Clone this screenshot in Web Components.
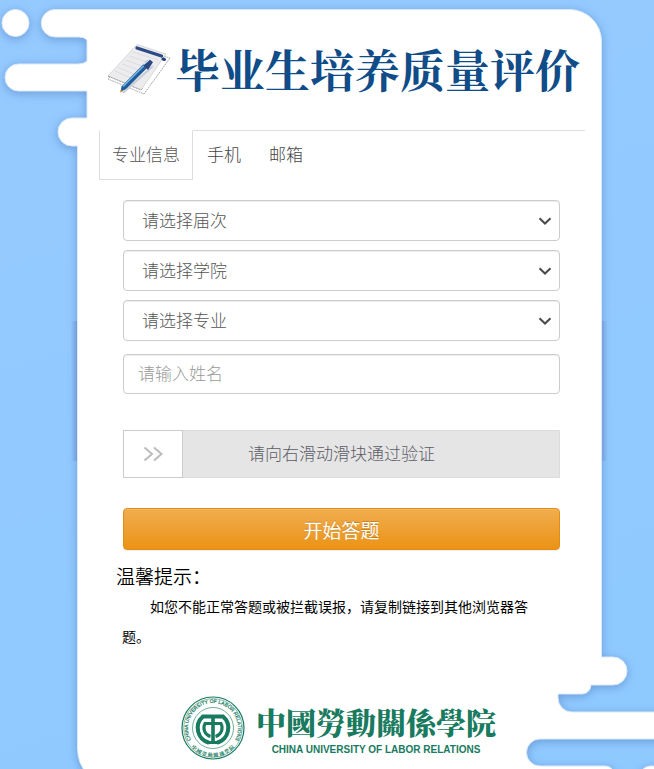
<!DOCTYPE html>
<html lang="zh-CN">
<head>
<meta charset="utf-8">
<meta name="viewport" content="width=device-width, initial-scale=1">
<title>毕业生培养质量评价</title>
<style>
  body {
    margin: 0;
    background: #92caff;
    font-family: "Noto Sans CJK SC", sans-serif;
    font-size: 17px;
    font-weight: 300;
    color: #555;
  }
</style>
</head>
<body>
<survey-page>
  <survey-title>毕业生培养质量评价</survey-title>
  <tab-strip>
    <a href="#major" class="active">专业信息</a>
    <a href="#phone">手机</a>
    <a href="#mail">邮箱</a>
  </tab-strip>
  <survey-form>
    <choice-field label="请选择届次"></choice-field>
    <choice-field label="请选择学院"></choice-field>
    <choice-field label="请选择专业"></choice-field>
    <name-field label="请输入姓名"></name-field>
    <slide-verify label="请向右滑动滑块通过验证"></slide-verify>
    <start-button>开始答题</start-button>
  </survey-form>
  <survey-tip>
    <span slot="heading">温馨提示：</span>
    如您不能正常答题或被拦截误报，请复制链接到其他浏览器答题。
  </survey-tip>
  <school-logo></school-logo>
</survey-page>

<script>
// Base class: puts the element's template into its shadow root
class BaseElement extends HTMLElement {
  constructor() {
    super();
    this.attachShadow({ mode: "open" });
  }

  connectedCallback() {
    this.shadowRoot.innerHTML = this.template();
  }

  get label() {
    return this.getAttribute("label") || "";
  }
}

class SurveyPage extends BaseElement {
  template() {
    return `
    <style>
      :host {
        display: grid;
        grid-template-columns: 99fr 486fr 69fr;
        position: relative;
        min-height: 100vh;
        overflow: hidden;
      }

      /* clouds and white sheet behind the content */
      .scene {
        position: absolute;
        inset: 0;
        width: 100%;
        height: 100%;
      }

      .sheet {
        filter: drop-shadow(0 2px 5px rgba(70, 110, 180, 0.5));
      }

      main {
        grid-column: 2;
        position: relative;
        min-width: 0;
      }
    </style>

    <svg class="scene" viewBox="0 0 654 769" preserveAspectRatio="none" aria-hidden="true">
      <defs>
        <linearGradient id="sky" x1="0" y1="0" x2="0.3" y2="1">
          <stop offset="0" stop-color="#95caff"/>
          <stop offset="1" stop-color="#8fcaff"/>
        </linearGradient>
        <linearGradient id="fadeLeft">
          <stop offset="0" stop-color="#6c86c4" stop-opacity="0"/>
          <stop offset="1" stop-color="#6c86c4" stop-opacity="0.5"/>
        </linearGradient>
        <linearGradient id="fadeRight">
          <stop offset="0" stop-color="#6c86c4" stop-opacity="0.4"/>
          <stop offset="1" stop-color="#6c86c4" stop-opacity="0"/>
        </linearGradient>
      </defs>
      <rect width="654" height="769" fill="url(#sky)"/>
      <g class="sheet" fill="#fff" stroke="#dce9fa" stroke-width="1">
        <circle cx="15.5" cy="23" r="13.5"/>
        <path d="M55 9.500H570A32 32 0 0 1 601.500 41V657H613A14 14 0 0 1 613 685H591A9 9 0 0 1 582 694H558V698A14 14 0 0 0 572 712H670V739H540A13.500 13.500 0 0 0 540 766H605Q611 766 614 772V800H100L88 775Q77.500 764 77.500 748V146H72A14 14 0 0 1 72 118H87V91H18.500A13.500 13.500 0 0 1 18.500 64H78Q84 64 87 61V40Q84 37 79 37H55A13.700 13.700 0 0 1 55 9.500Z"/>
        <path d="M638 780Q640 767 650 766H670V780Z"/>
      </g>
      <rect x="71" y="321" width="6" height="140" fill="url(#fadeLeft)"/>
      <rect x="602" y="321" width="6" height="140" fill="url(#fadeRight)"/>
    </svg>
    <main><slot></slot></main>
    `;
  }
}

class SurveyTitle extends BaseElement {
  template() {
    return `
    <style>
      :host {
        display: flex;
        align-items: center;
        gap: 4px;
        height: 130px;
        padding: 8px 0 0 6px;
        box-sizing: border-box;
      }

      svg {
        flex: none;
        width: 66px;
        height: 54px;
      }

      h1 {
        margin: 0;
        font-family: "Noto Serif CJK SC", "Noto Sans CJK SC", serif;
        font-size: 45px;
        line-height: 60px;
        font-weight: 700;
        color: #0f4c88;
        white-space: nowrap;
      }
    </style>

    <svg viewBox="105 44 66 54" aria-hidden="true">
      <path d="M139 51L170 60L144 96L108 81Z" fill="#fff" stroke="#9a9a9a" stroke-width=".8" stroke-dasharray="2 .6"/>
      <path d="M137 46.500L166 56L141 92L108 78Z" fill="#ececee" stroke="#bbb" stroke-width=".5"/>
      <path d="M108 78L141 92L143 90" fill="none" stroke="#888" stroke-width=".8" stroke-dasharray="2 1"/>
      <path d="M133 54L158 62M129.500 58L152 66M126 62L147 70M122.500 66L141 73M118.500 69.500L136 77M115 73L131 80" stroke="#dddde0" stroke-width="1"/>
      <path d="M137 50L161.500 58" stroke="#2b4a86" stroke-width="3.200" stroke-linecap="round"/>
      <path d="M163 61L164.500 61.500" stroke="#24407c" stroke-width="3" stroke-linecap="round"/>
      <path d="M123 95L153 68" stroke="#c9ccd2" stroke-width="2"/>
      <path d="M120.500 94L121.500 88.500L147 62.500Q151 60.500 152.500 64.500L126 91Z" fill="#1f5c9e"/>
      <path d="M123 88.500L148 63.500" stroke="#7fbbe2" stroke-width="1.500"/>
      <path d="M143 67L148 72L153 64L149 62Z" fill="#2b477f"/>
      <path d="M143.500 66.500L149 62" stroke="#e1e8f0" stroke-width="1.200"/>
      <path d="M120 94.500L120.700 91.500L123 93.500Z" fill="#d79a42"/>
    </svg>
    <h1><slot></slot></h1>
    `;
  }
}

class TabStrip extends BaseElement {
  template() {
    return `
    <style>
      :host {
        display: flex;
        height: 50px;
      }

      nav {
        display: flex;
        flex: none;
      }

      /* the top rule runs on to the right of the last tab */
      .rest {
        flex: 1;
        border-top: 1px solid #ddd;
      }

      ::slotted(a) {
        box-sizing: border-box;
        padding: 0 14px;
        border-top: 1px solid #ddd;
        line-height: 45px;
        color: #444;
        text-decoration: none;
      }

      ::slotted(a.active) {
        padding: 0 12px;
        border: 1px solid #ddd;
        border-top-color: transparent;
        color: #555;
      }
    </style>

    <nav><slot></slot></nav>
    <div class="rest"></div>
    `;
  }
}

class SurveyForm extends BaseElement {
  template() {
    return `
    <style>
      :host {
        display: block;
        padding: 20px 25px 0 24px;
      }

      form {
        display: flex;
        flex-direction: column;
        gap: 9px;
      }
    </style>

    <form><slot></slot></form>
    `;
  }
}

class ChoiceField extends BaseElement {
  template() {
    return `
    <style>
      :host {
        display: grid;
        align-items: center;
      }

      select, svg {
        grid-area: 1 / 1;
      }

      select {
        appearance: none;
        box-sizing: border-box;
        width: 100%;
        height: 41px;
        margin: 0;
        padding: 0 36px 3px 18px;
        border: 1px solid #ccc;
        border-radius: 4px;
        background: #fff;
        box-shadow: inset 0 1px 1px rgba(0, 0, 0, 0.075);
        font: inherit;
        color: #555;
      }

      svg {
        justify-self: end;
        width: 14px;
        height: 8px;
        margin-right: 8px;
        pointer-events: none;
      }
    </style>

    <select aria-label="${this.label}">
      <option>${this.label}</option>
    </select>
    <svg viewBox="0 0 14 8" aria-hidden="true">
      <path d="M1.500 1.200L7 6.500L12.500 1.200" fill="none" stroke="#4a4a4a" stroke-width="2"/>
    </svg>
    `;
  }
}

class NameField extends BaseElement {
  template() {
    return `
    <style>
      :host {
        display: block;
        padding: 4px 0 27px;
      }

      input {
        display: block;
        box-sizing: border-box;
        width: 100%;
        height: 40px;
        padding: 0 14px 3px;
        border: 1px solid #ccc;
        border-radius: 4px;
        background: #fff;
        box-shadow: inset 0 1px 1px rgba(0, 0, 0, 0.075);
        font: inherit;
        color: #555;
      }

      input::placeholder {
        color: #999;
      }
    </style>

    <input type="text" placeholder="${this.label}" aria-label="${this.label}">
    `;
  }
}

class SlideVerify extends BaseElement {
  template() {
    return `
    <style>
      :host {
        display: grid;
        align-items: center;
        padding-bottom: 21px;
      }

      input, label {
        grid-area: 1 / 1;
      }

      input {
        appearance: none;
        box-sizing: border-box;
        width: 100%;
        height: 48px;
        margin: 0;
        border: 1px solid #ddd;
        background: #e5e5e5;
      }

      input::-webkit-slider-thumb {
        appearance: none;
        box-sizing: border-box;
        width: 60px;
        height: 48px;
        margin: 0 -1px;
        border: 1px solid #ccc;
        border-radius: 0;
        background: #fff url("data:image/svg+xml,%3Csvg xmlns='http://www.w3.org/2000/svg' width='20' height='16'%3E%3Cpath d='M1.500 1.500L9 8L1.500 14.500M11 1.500L18.500 8L11 14.500' fill='none' stroke='%23bbb' stroke-width='2'/%3E%3C/svg%3E") center no-repeat;
      }

      label {
        justify-self: center;
        padding-bottom: 3px;
        color: #5c5c66;
        pointer-events: none;
      }
    </style>

    <input id="slide" type="range" min="0" max="100" value="0">
    <label for="slide">${this.label}</label>
    `;
  }
}

class StartButton extends BaseElement {
  template() {
    return `
    <style>
      :host {
        display: block;
      }

      button {
        display: block;
        width: 100%;
        height: 42px;
        padding: 0;
        border: 1px solid #e38d13;
        border-radius: 4px;
        background: linear-gradient(#f0ad4e, #eb9316);
        box-shadow: inset 0 1px 0 rgba(255, 255, 255, 0.15), 0 1px 1px rgba(0, 0, 0, 0.075);
        font: inherit;
        font-size: 19px;
        font-weight: 400;
        color: #fff;
        text-shadow: 0 -1px 0 rgba(0, 0, 0, 0.2);
      }
    </style>

    <button type="button"><slot></slot></button>
    `;
  }
}

class SurveyTip extends BaseElement {
  template() {
    return `
    <style>
      :host {
        display: block;
        padding: 11px 33px 0 17px;
        color: #000;
      }

      h2 {
        margin: 0;
        font-size: 19px;
        line-height: 30px;
        font-weight: 350;
      }

      p {
        margin: 0;
        padding-left: 6px;
        font-size: 14px;
        line-height: 30px;
        font-weight: 400;
        text-indent: 2em;
      }
    </style>

    <h2><slot name="heading"></slot></h2>
    <p><slot></slot></p>
    `;
  }
}

class SchoolLogo extends BaseElement {
  template() {
    return `
    <style>
      :host {
        display: flex;
        align-items: center;
        gap: 11px;
        padding: 45px 0 8px 82px;
        color: #187a5e;
      }

      svg {
        flex: none;
        width: 64px;
        height: 64px;
      }

      .ring {
        font: 400 5px "Liberation Sans", sans-serif;
        fill: #187a5e;
        stroke: #187a5e;
        stroke-width: 0.2px;
      }

      .ring-cn {
        font: 900 5px "Noto Serif CJK TC", "Noto Serif CJK SC", serif;
        fill: #187a5e;
      }

      .names {
        display: flex;
        flex-direction: column;
        align-items: center;
        white-space: nowrap;
      }

      .cn {
        font: 900 30px/44px "Noto Serif CJK TC", "Noto Serif CJK SC", serif;
      }

      .en {
        font: 700 10px/14px "Liberation Sans", sans-serif;
      }
    </style>

    <svg viewBox="0 0 64 64" role="img" aria-label="校徽">
      <defs>
        <path id="top" d="M13 48.200A25 25 0 1 1 51 48.200"/>
        <path id="bottom" d="M4.500 40A28.500 28.500 0 0 0 59.500 40"/>
      </defs>
      <g fill="none" stroke="#187a5e">
        <circle cx="32" cy="32" r="31" stroke-width="1.200"/>
        <circle cx="32" cy="32" r="29.300" stroke-width=".5"/>
        <circle cx="32" cy="32" r="20.500" stroke-width=".6"/>
        <path d="M28 46.700A15.300 15.300 0 0 1 22 20.400H42A15.300 15.300 0 0 1 36 46.700" stroke-width="4"/>
        <path d="M29.500 40.500A9 9 0 0 1 24 27.500H40A9 9 0 0 1 34.500 40.500" stroke-width="3"/>
        <path d="M32 20V46" stroke-width="3.600"/>
        <path d="M25.500 46.500H38.500" stroke-width="3"/>
      </g>
      <text class="ring"><textPath href="#top" startOffset="50%" text-anchor="middle">CHINA UNIVERSITY OF LABOR RELATIONS</textPath></text>
      <text class="ring-cn"><textPath href="#bottom" startOffset="50%" text-anchor="middle">中 國 勞 動 關 係 學 院</textPath></text>
    </svg>
    <div class="names">
      <span class="cn" lang="zh-TW">中國勞動關係學院</span>
      <span class="en">CHINA UNIVERSITY OF LABOR RELATIONS</span>
    </div>
    `;
  }
}

customElements.define("survey-page", SurveyPage);
customElements.define("survey-title", SurveyTitle);
customElements.define("tab-strip", TabStrip);
customElements.define("survey-form", SurveyForm);
customElements.define("choice-field", ChoiceField);
customElements.define("name-field", NameField);
customElements.define("slide-verify", SlideVerify);
customElements.define("start-button", StartButton);
customElements.define("survey-tip", SurveyTip);
customElements.define("school-logo", SchoolLogo);
</script>
</body>
</html>
